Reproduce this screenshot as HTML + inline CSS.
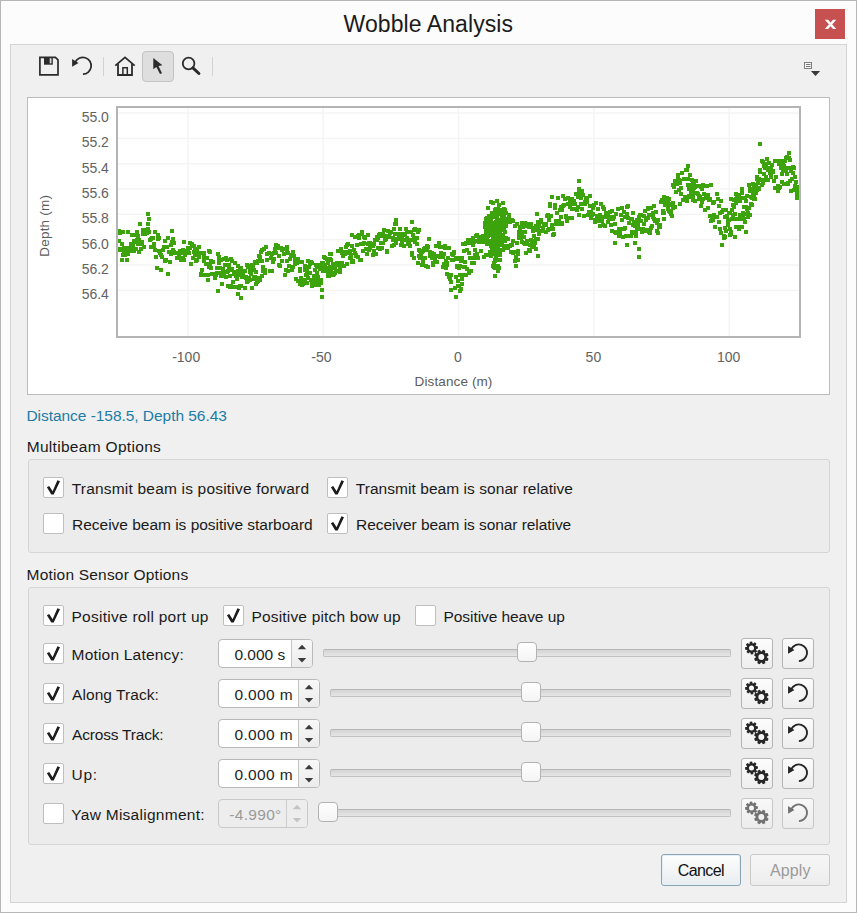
<!DOCTYPE html><html><head><meta charset="utf-8"><title>Wobble Analysis</title><style>
html,body{margin:0;padding:0}
body{width:857px;height:913px;position:relative;overflow:hidden;background:#fcfcfc;font-family:"Liberation Sans",sans-serif;}
.abs,.t,.cb,.grp,.btn,.spin,.trk,.thumb{position:absolute;box-sizing:border-box}
.t{white-space:pre;line-height:20px;height:20px}
.cb{width:21px;height:21px;background:#fff;border:1px solid #bfbfbf;border-radius:2px}
.grp{background:#ececec;border:1px solid #d5d5d5;border-radius:3px}
.btn{border:1px solid #b4b4b4;border-radius:3px;background:linear-gradient(#fcfcfc,#eeeeee)}
.spin{height:29px;border:1px solid #b9b9b9;border-radius:4px;background:#fff;overflow:hidden}
.spin .ar{position:absolute;top:0;bottom:0;right:0;width:20px;border-left:1px solid #c4c4c4;background:linear-gradient(#f8f8f8,#ececec)}
.spin.dis{background:#ededed;border-color:#c9c9c9}
.spin.dis .ar{background:#ededed;border-left-color:#cfcfcf}
.trk{height:8px;border:1px solid #c2c2c2;border-top-color:#b6b6b6;border-radius:2px;background:linear-gradient(#d4d4d4,#e6e6e6)}
.thumb{width:20px;height:20px;border:1px solid #b2b2b2;border-radius:4px;background:linear-gradient(#ffffff,#f4f4f4)}
svg{position:absolute;left:0;top:0}

</style></head><body>
<div class="abs" style="left:0;top:0;width:857px;height:913px;border:1px solid #b6b6b6"></div>
<div class="abs" style="left:10px;top:44px;width:837px;height:859px;border:1px solid #d4d4d4;background:#f0f0f0"></div>
<div class="abs" style="left:815px;top:9px;width:30px;height:30px;background:#c75050"></div>
<div class="abs" style="left:142px;top:51px;width:32px;height:31px;background:#dedede;border:1px solid #c3c3c3;border-radius:4px"></div>
<div class="abs" style="left:103px;top:57px;width:1px;height:19px;background:#d2d2d2"></div>
<div class="abs" style="left:212px;top:57px;width:1px;height:19px;background:#d2d2d2"></div>
<div class="abs" style="left:27px;top:97px;width:803px;height:298px;background:#fff;border:1px solid #bcbcbc"></div>
<div class="grp" style="left:28px;top:459px;width:802px;height:94px"></div>
<div class="grp" style="left:28px;top:587px;width:802px;height:258px"></div>
<div class="cb" style="left:43px;top:477px"></div>
<div class="cb" style="left:43px;top:513px"></div>
<div class="cb" style="left:327px;top:477px"></div>
<div class="cb" style="left:327px;top:513px"></div>
<div class="cb" style="left:43px;top:605px"></div>
<div class="cb" style="left:223px;top:605px"></div>
<div class="cb" style="left:415px;top:605px"></div>
<div class="cb" style="left:43px;top:643px"></div>
<div class="cb" style="left:43px;top:683px"></div>
<div class="cb" style="left:43px;top:723px"></div>
<div class="cb" style="left:43px;top:763px"></div>
<div class="cb" style="left:43px;top:803px"></div>
<div class="spin" style="left:218px;top:639px;width:95px"><div class="ar"></div></div>
<div class="spin" style="left:218px;top:679px;width:102px"><div class="ar"></div></div>
<div class="spin" style="left:218px;top:719px;width:102px"><div class="ar"></div></div>
<div class="spin" style="left:218px;top:759px;width:102px"><div class="ar"></div></div>
<div class="spin dis" style="left:218px;top:799px;width:90px"><div class="ar"></div></div>
<div class="trk" style="left:323px;top:649px;width:408px"></div>
<div class="thumb" style="left:517px;top:642px"></div>
<div class="trk" style="left:330px;top:689px;width:401px"></div>
<div class="thumb" style="left:521px;top:682px"></div>
<div class="trk" style="left:330px;top:729px;width:401px"></div>
<div class="thumb" style="left:521px;top:722px"></div>
<div class="trk" style="left:330px;top:769px;width:401px"></div>
<div class="thumb" style="left:521px;top:762px"></div>
<div class="trk" style="left:318px;top:809px;width:413px"></div>
<div class="thumb" style="left:318px;top:802px"></div>
<div class="btn" style="left:741px;top:638px;width:32px;height:31px;"></div>
<div class="btn" style="left:782px;top:638px;width:32px;height:31px;"></div>
<div class="btn" style="left:741px;top:678px;width:32px;height:31px;"></div>
<div class="btn" style="left:782px;top:678px;width:32px;height:31px;"></div>
<div class="btn" style="left:741px;top:718px;width:32px;height:31px;"></div>
<div class="btn" style="left:782px;top:718px;width:32px;height:31px;"></div>
<div class="btn" style="left:741px;top:758px;width:32px;height:31px;"></div>
<div class="btn" style="left:782px;top:758px;width:32px;height:31px;"></div>
<div class="btn" style="left:741px;top:798px;width:32px;height:31px;border-color:#c6c6c6;background:linear-gradient(#f8f8f8,#ececec);"></div>
<div class="btn" style="left:782px;top:798px;width:32px;height:31px;border-color:#c6c6c6;background:linear-gradient(#f8f8f8,#ececec);"></div>
<div class="btn" style="left:661px;top:854px;width:80px;height:32px;border-color:#8aa3b5;box-shadow:inset 0 0 0 1px #e4f0f8;background:linear-gradient(#fdfdfd,#e9edf0)"></div>
<div class="btn" style="left:750px;top:854px;width:80px;height:32px;border-color:#c9c9c9;background:linear-gradient(#f6f6f6,#ededed)"></div>
<svg width="857" height="913" viewBox="0 0 857 913" font-family="Liberation Sans, sans-serif"><path d="M824.8 19.8h3.3l8.2 9.3h-3.3z" fill="#fff"/><path d="M836.3 19.8h-3.3l-8.2 9.3h3.3z" fill="#fff"/><path d="M39.9 57.3H55.4L58 59.9V74.9H39.9Z" fill="none" stroke="#2b2b2b" stroke-width="1.7" stroke-linejoin="miter"/><rect x="44" y="57" width="8.8" height="7.7" fill="#2b2b2b"/><rect x="49.7" y="58.2" width="1.8" height="5.2" fill="#d8d8d8"/><path d="M75.32 61.94A8.4 8.4 0 1 1 82.95 74.15" fill="none" stroke="#2b2b2b" stroke-width="1.75"/><path d="M72.10 59.00L72.10 66.70L78.50 63.10Z" fill="#2b2b2b"/><path d="M115.3 65.6L125 57.4L134.7 65.6" fill="none" stroke="#2b2b2b" stroke-width="1.8" stroke-linejoin="miter"/><path d="M118 64V75H132V64" fill="none" stroke="#2b2b2b" stroke-width="1.8"/><path d="M122.9 75V67.7H127.3V75" fill="none" stroke="#2b2b2b" stroke-width="1.5"/><path d="M153.3 57.9V69.3L156.4 67L160 74.1L162 73.2L158.5 66.1L162.4 65.2Z" fill="#2b2b2b"/><circle cx="188.6" cy="63.5" r="5.8" fill="none" stroke="#2b2b2b" stroke-width="1.8"/><path d="M192.9 67.9L198.9 73.5" stroke="#2b2b2b" stroke-width="3" stroke-linecap="round"/><rect x="804.5" y="62.5" width="7" height="6" fill="#f6f6f6" stroke="#808080" stroke-width="1"/><path d="M806 64.5h4.5M806 66.5h4.5" stroke="#7a7a7a" stroke-width="1"/><path d="M810.9 71H820.1L815.5 76Z" fill="#3a3a3a"/><rect x="118" y="112.3" width="681" height="1.4" fill="#f4f4f4"/><rect x="118" y="137.6" width="681" height="1.4" fill="#f4f4f4"/><rect x="118" y="163.0" width="681" height="1.4" fill="#f4f4f4"/><rect x="118" y="188.3" width="681" height="1.4" fill="#f4f4f4"/><rect x="118" y="213.6" width="681" height="1.4" fill="#f4f4f4"/><rect x="118" y="238.9" width="681" height="1.4" fill="#f4f4f4"/><rect x="118" y="264.3" width="681" height="1.4" fill="#f4f4f4"/><rect x="118" y="289.6" width="681" height="1.4" fill="#f4f4f4"/><rect x="187.3" y="108" width="1.4" height="228" fill="#f4f4f4"/><rect x="322.5" y="108" width="1.4" height="228" fill="#f4f4f4"/><rect x="457.9" y="108" width="1.4" height="228" fill="#f4f4f4"/><rect x="593.3" y="108" width="1.4" height="228" fill="#f4f4f4"/><rect x="728.5" y="108" width="1.4" height="228" fill="#f4f4f4"/><clipPath id="pc"><rect x="118" y="108" width="682" height="228"/></clipPath><path clip-path="url(#pc)" d="M117 248h4v4h-4zM117 239h4v4h-4zM117 229h4v4h-4zM118 231h4v4h-4zM118 247h4v4h-4zM119 247h4v4h-4zM120 258h4v4h-4zM120 242h4v4h-4zM121 253h4v4h-4zM121 248h4v4h-4zM121 230h4v4h-4zM122 249h4v4h-4zM122 246h4v4h-4zM123 253h4v4h-4zM124 246h4v4h-4zM125 248h4v4h-4zM125 258h4v4h-4zM126 252h4v4h-4zM126 230h4v4h-4zM127 246h4v4h-4zM128 249h4v4h-4zM129 242h4v4h-4zM130 233h4v4h-4zM130 247h4v4h-4zM131 244h4v4h-4zM131 247h4v4h-4zM132 233h4v4h-4zM132 249h4v4h-4zM132 239h4v4h-4zM133 240h4v4h-4zM134 247h4v4h-4zM135 238h4v4h-4zM135 230h4v4h-4zM136 234h4v4h-4zM136 242h4v4h-4zM137 238h4v4h-4zM137 250h4v4h-4zM138 242h4v4h-4zM139 247h4v4h-4zM140 240h4v4h-4zM140 241h4v4h-4zM141 232h4v4h-4zM141 228h4v4h-4zM141 229h4v4h-4zM142 245h4v4h-4zM143 232h4v4h-4zM143 229h4v4h-4zM144 231h4v4h-4zM145 228h4v4h-4zM145 231h4v4h-4zM146 227h4v4h-4zM147 230h4v4h-4zM148 238h4v4h-4zM149 237h4v4h-4zM149 245h4v4h-4zM150 236h4v4h-4zM151 236h4v4h-4zM152 245h4v4h-4zM152 242h4v4h-4zM153 230h4v4h-4zM153 248h4v4h-4zM154 255h4v4h-4zM156 233h4v4h-4zM156 237h4v4h-4zM157 249h4v4h-4zM157 236h4v4h-4zM158 251h4v4h-4zM159 253h4v4h-4zM160 255h4v4h-4zM161 248h4v4h-4zM162 245h4v4h-4zM163 239h4v4h-4zM163 259h4v4h-4zM164 258h4v4h-4zM165 245h4v4h-4zM166 236h4v4h-4zM167 250h4v4h-4zM168 260h4v4h-4zM169 243h4v4h-4zM169 252h4v4h-4zM170 240h4v4h-4zM171 248h4v4h-4zM171 237h4v4h-4zM172 250h4v4h-4zM172 241h4v4h-4zM172 241h4v4h-4zM173 251h4v4h-4zM174 251h4v4h-4zM175 251h4v4h-4zM175 256h4v4h-4zM176 256h4v4h-4zM177 252h4v4h-4zM177 254h4v4h-4zM178 249h4v4h-4zM179 258h4v4h-4zM180 251h4v4h-4zM181 256h4v4h-4zM181 248h4v4h-4zM182 240h4v4h-4zM182 258h4v4h-4zM183 253h4v4h-4zM183 253h4v4h-4zM184 249h4v4h-4zM185 249h4v4h-4zM186 250h4v4h-4zM186 246h4v4h-4zM187 251h4v4h-4zM188 246h4v4h-4zM188 241h4v4h-4zM189 262h4v4h-4zM190 242h4v4h-4zM191 244h4v4h-4zM191 256h4v4h-4zM192 250h4v4h-4zM192 244h4v4h-4zM193 253h4v4h-4zM193 248h4v4h-4zM193 247h4v4h-4zM194 250h4v4h-4zM194 259h4v4h-4zM195 258h4v4h-4zM195 248h4v4h-4zM196 253h4v4h-4zM196 253h4v4h-4zM197 255h4v4h-4zM197 245h4v4h-4zM198 251h4v4h-4zM199 273h4v4h-4zM199 272h4v4h-4zM200 268h4v4h-4zM201 273h4v4h-4zM202 259h4v4h-4zM202 251h4v4h-4zM202 255h4v4h-4zM203 273h4v4h-4zM204 256h4v4h-4zM204 262h4v4h-4zM205 256h4v4h-4zM206 273h4v4h-4zM206 278h4v4h-4zM207 249h4v4h-4zM207 265h4v4h-4zM208 250h4v4h-4zM208 262h4v4h-4zM209 259h4v4h-4zM209 266h4v4h-4zM210 272h4v4h-4zM211 260h4v4h-4zM212 272h4v4h-4zM213 276h4v4h-4zM214 273h4v4h-4zM215 266h4v4h-4zM215 271h4v4h-4zM216 252h4v4h-4zM217 257h4v4h-4zM217 261h4v4h-4zM217 255h4v4h-4zM218 266h4v4h-4zM219 274h4v4h-4zM219 271h4v4h-4zM219 258h4v4h-4zM220 274h4v4h-4zM220 282h4v4h-4zM221 267h4v4h-4zM222 271h4v4h-4zM222 257h4v4h-4zM223 263h4v4h-4zM224 256h4v4h-4zM224 275h4v4h-4zM225 270h4v4h-4zM225 258h4v4h-4zM226 284h4v4h-4zM226 269h4v4h-4zM227 267h4v4h-4zM227 263h4v4h-4zM228 274h4v4h-4zM228 285h4v4h-4zM229 257h4v4h-4zM229 284h4v4h-4zM230 259h4v4h-4zM230 267h4v4h-4zM230 268h4v4h-4zM231 280h4v4h-4zM231 285h4v4h-4zM232 272h4v4h-4zM232 270h4v4h-4zM233 270h4v4h-4zM233 261h4v4h-4zM234 270h4v4h-4zM234 274h4v4h-4zM234 285h4v4h-4zM235 277h4v4h-4zM236 264h4v4h-4zM236 273h4v4h-4zM236 269h4v4h-4zM237 271h4v4h-4zM237 270h4v4h-4zM237 286h4v4h-4zM238 269h4v4h-4zM238 266h4v4h-4zM238 284h4v4h-4zM239 284h4v4h-4zM239 266h4v4h-4zM240 271h4v4h-4zM240 269h4v4h-4zM240 275h4v4h-4zM241 272h4v4h-4zM241 269h4v4h-4zM242 275h4v4h-4zM242 269h4v4h-4zM243 269h4v4h-4zM243 286h4v4h-4zM244 276h4v4h-4zM244 275h4v4h-4zM245 263h4v4h-4zM245 280h4v4h-4zM246 265h4v4h-4zM246 279h4v4h-4zM247 278h4v4h-4zM247 276h4v4h-4zM248 268h4v4h-4zM248 270h4v4h-4zM248 278h4v4h-4zM249 264h4v4h-4zM249 272h4v4h-4zM250 263h4v4h-4zM250 286h4v4h-4zM251 264h4v4h-4zM251 268h4v4h-4zM252 268h4v4h-4zM252 277h4v4h-4zM252 276h4v4h-4zM253 260h4v4h-4zM253 275h4v4h-4zM254 276h4v4h-4zM254 282h4v4h-4zM254 270h4v4h-4zM255 280h4v4h-4zM255 261h4v4h-4zM256 279h4v4h-4zM256 259h4v4h-4zM257 254h4v4h-4zM257 276h4v4h-4zM258 278h4v4h-4zM258 255h4v4h-4zM259 250h4v4h-4zM260 259h4v4h-4zM260 248h4v4h-4zM260 274h4v4h-4zM261 265h4v4h-4zM261 269h4v4h-4zM262 247h4v4h-4zM263 271h4v4h-4zM263 270h4v4h-4zM263 268h4v4h-4zM264 245h4v4h-4zM265 258h4v4h-4zM265 252h4v4h-4zM267 251h4v4h-4zM267 251h4v4h-4zM268 269h4v4h-4zM268 269h4v4h-4zM269 256h4v4h-4zM270 252h4v4h-4zM270 269h4v4h-4zM271 260h4v4h-4zM272 257h4v4h-4zM272 251h4v4h-4zM273 247h4v4h-4zM274 243h4v4h-4zM274 251h4v4h-4zM275 246h4v4h-4zM276 244h4v4h-4zM277 263h4v4h-4zM277 254h4v4h-4zM278 264h4v4h-4zM279 246h4v4h-4zM280 259h4v4h-4zM280 248h4v4h-4zM281 247h4v4h-4zM282 252h4v4h-4zM282 252h4v4h-4zM283 273h4v4h-4zM284 268h4v4h-4zM285 259h4v4h-4zM285 248h4v4h-4zM285 245h4v4h-4zM286 251h4v4h-4zM286 269h4v4h-4zM287 264h4v4h-4zM288 257h4v4h-4zM289 254h4v4h-4zM289 253h4v4h-4zM290 268h4v4h-4zM290 254h4v4h-4zM291 250h4v4h-4zM291 265h4v4h-4zM292 254h4v4h-4zM293 258h4v4h-4zM293 262h4v4h-4zM294 277h4v4h-4zM295 261h4v4h-4zM296 257h4v4h-4zM296 279h4v4h-4zM297 279h4v4h-4zM297 260h4v4h-4zM298 282h4v4h-4zM298 269h4v4h-4zM298 267h4v4h-4zM299 278h4v4h-4zM299 276h4v4h-4zM300 283h4v4h-4zM300 260h4v4h-4zM301 282h4v4h-4zM302 278h4v4h-4zM302 281h4v4h-4zM303 264h4v4h-4zM303 268h4v4h-4zM303 278h4v4h-4zM304 273h4v4h-4zM305 281h4v4h-4zM305 273h4v4h-4zM305 269h4v4h-4zM306 276h4v4h-4zM306 259h4v4h-4zM307 265h4v4h-4zM308 271h4v4h-4zM308 262h4v4h-4zM308 261h4v4h-4zM309 260h4v4h-4zM309 278h4v4h-4zM310 261h4v4h-4zM310 284h4v4h-4zM310 282h4v4h-4zM311 280h4v4h-4zM312 283h4v4h-4zM312 283h4v4h-4zM312 279h4v4h-4zM312 274h4v4h-4zM313 277h4v4h-4zM313 268h4v4h-4zM314 263h4v4h-4zM314 283h4v4h-4zM315 279h4v4h-4zM315 265h4v4h-4zM315 271h4v4h-4zM316 275h4v4h-4zM317 283h4v4h-4zM317 278h4v4h-4zM318 267h4v4h-4zM318 263h4v4h-4zM319 278h4v4h-4zM319 281h4v4h-4zM320 265h4v4h-4zM320 261h4v4h-4zM321 269h4v4h-4zM321 261h4v4h-4zM322 255h4v4h-4zM322 263h4v4h-4zM322 269h4v4h-4zM323 266h4v4h-4zM323 263h4v4h-4zM323 256h4v4h-4zM324 266h4v4h-4zM324 268h4v4h-4zM325 268h4v4h-4zM325 257h4v4h-4zM326 274h4v4h-4zM326 261h4v4h-4zM326 270h4v4h-4zM327 274h4v4h-4zM327 266h4v4h-4zM327 271h4v4h-4zM328 257h4v4h-4zM328 265h4v4h-4zM328 252h4v4h-4zM329 268h4v4h-4zM329 252h4v4h-4zM329 258h4v4h-4zM330 271h4v4h-4zM331 263h4v4h-4zM331 262h4v4h-4zM331 273h4v4h-4zM332 266h4v4h-4zM332 272h4v4h-4zM333 271h4v4h-4zM333 271h4v4h-4zM333 265h4v4h-4zM334 269h4v4h-4zM335 261h4v4h-4zM335 262h4v4h-4zM336 263h4v4h-4zM336 261h4v4h-4zM336 261h4v4h-4zM336 249h4v4h-4zM337 263h4v4h-4zM337 249h4v4h-4zM338 267h4v4h-4zM338 270h4v4h-4zM339 263h4v4h-4zM339 247h4v4h-4zM340 261h4v4h-4zM340 251h4v4h-4zM340 263h4v4h-4zM341 254h4v4h-4zM341 250h4v4h-4zM342 251h4v4h-4zM342 264h4v4h-4zM343 252h4v4h-4zM343 250h4v4h-4zM344 245h4v4h-4zM345 262h4v4h-4zM345 243h4v4h-4zM346 242h4v4h-4zM346 251h4v4h-4zM347 250h4v4h-4zM348 249h4v4h-4zM348 256h4v4h-4zM349 253h4v4h-4zM349 255h4v4h-4zM350 244h4v4h-4zM350 260h4v4h-4zM350 233h4v4h-4zM351 260h4v4h-4zM351 259h4v4h-4zM352 248h4v4h-4zM353 251h4v4h-4zM353 235h4v4h-4zM354 253h4v4h-4zM354 254h4v4h-4zM355 243h4v4h-4zM356 234h4v4h-4zM356 255h4v4h-4zM357 236h4v4h-4zM357 233h4v4h-4zM358 258h4v4h-4zM358 258h4v4h-4zM359 258h4v4h-4zM359 242h4v4h-4zM360 232h4v4h-4zM360 230h4v4h-4zM361 249h4v4h-4zM361 242h4v4h-4zM362 241h4v4h-4zM362 235h4v4h-4zM363 236h4v4h-4zM364 247h4v4h-4zM365 252h4v4h-4zM366 242h4v4h-4zM366 233h4v4h-4zM367 248h4v4h-4zM367 241h4v4h-4zM368 241h4v4h-4zM368 246h4v4h-4zM369 242h4v4h-4zM370 243h4v4h-4zM371 253h4v4h-4zM371 244h4v4h-4zM372 242h4v4h-4zM372 249h4v4h-4zM373 252h4v4h-4zM373 238h4v4h-4zM374 252h4v4h-4zM375 235h4v4h-4zM375 238h4v4h-4zM376 236h4v4h-4zM376 246h4v4h-4zM377 233h4v4h-4zM378 232h4v4h-4zM378 247h4v4h-4zM379 241h4v4h-4zM379 234h4v4h-4zM380 246h4v4h-4zM381 241h4v4h-4zM381 232h4v4h-4zM382 234h4v4h-4zM382 228h4v4h-4zM383 234h4v4h-4zM383 238h4v4h-4zM384 237h4v4h-4zM385 250h4v4h-4zM385 249h4v4h-4zM386 235h4v4h-4zM386 229h4v4h-4zM387 235h4v4h-4zM387 234h4v4h-4zM388 231h4v4h-4zM389 230h4v4h-4zM390 244h4v4h-4zM391 238h4v4h-4zM391 236h4v4h-4zM392 243h4v4h-4zM392 227h4v4h-4zM393 222h4v4h-4zM393 232h4v4h-4zM394 241h4v4h-4zM394 222h4v4h-4zM395 237h4v4h-4zM396 232h4v4h-4zM397 237h4v4h-4zM397 236h4v4h-4zM398 227h4v4h-4zM399 243h4v4h-4zM399 237h4v4h-4zM399 232h4v4h-4zM400 240h4v4h-4zM400 234h4v4h-4zM401 233h4v4h-4zM401 232h4v4h-4zM402 244h4v4h-4zM403 233h4v4h-4zM403 238h4v4h-4zM404 227h4v4h-4zM405 236h4v4h-4zM405 230h4v4h-4zM406 242h4v4h-4zM407 238h4v4h-4zM407 242h4v4h-4zM408 244h4v4h-4zM409 238h4v4h-4zM409 230h4v4h-4zM410 253h4v4h-4zM410 251h4v4h-4zM411 233h4v4h-4zM412 236h4v4h-4zM412 256h4v4h-4zM412 228h4v4h-4zM413 227h4v4h-4zM413 240h4v4h-4zM414 236h4v4h-4zM415 242h4v4h-4zM415 236h4v4h-4zM416 230h4v4h-4zM416 261h4v4h-4zM417 248h4v4h-4zM417 254h4v4h-4zM418 256h4v4h-4zM418 249h4v4h-4zM419 253h4v4h-4zM420 263h4v4h-4zM420 250h4v4h-4zM421 260h4v4h-4zM421 257h4v4h-4zM421 249h4v4h-4zM422 247h4v4h-4zM423 256h4v4h-4zM423 246h4v4h-4zM424 248h4v4h-4zM424 264h4v4h-4zM425 244h4v4h-4zM425 246h4v4h-4zM426 265h4v4h-4zM426 245h4v4h-4zM427 237h4v4h-4zM428 254h4v4h-4zM428 250h4v4h-4zM429 253h4v4h-4zM430 251h4v4h-4zM430 256h4v4h-4zM431 261h4v4h-4zM431 263h4v4h-4zM432 252h4v4h-4zM433 258h4v4h-4zM434 254h4v4h-4zM434 244h4v4h-4zM435 260h4v4h-4zM435 260h4v4h-4zM436 254h4v4h-4zM437 241h4v4h-4zM438 255h4v4h-4zM438 245h4v4h-4zM439 255h4v4h-4zM439 245h4v4h-4zM439 251h4v4h-4zM440 245h4v4h-4zM440 254h4v4h-4zM441 265h4v4h-4zM441 255h4v4h-4zM442 252h4v4h-4zM442 262h4v4h-4zM443 244h4v4h-4zM443 246h4v4h-4zM444 266h4v4h-4zM444 259h4v4h-4zM445 261h4v4h-4zM445 272h4v4h-4zM445 263h4v4h-4zM446 256h4v4h-4zM447 275h4v4h-4zM447 246h4v4h-4zM448 275h4v4h-4zM448 277h4v4h-4zM449 280h4v4h-4zM449 273h4v4h-4zM450 258h4v4h-4zM450 252h4v4h-4zM451 253h4v4h-4zM451 258h4v4h-4zM452 250h4v4h-4zM452 251h4v4h-4zM453 286h4v4h-4zM454 275h4v4h-4zM454 256h4v4h-4zM455 265h4v4h-4zM455 264h4v4h-4zM455 257h4v4h-4zM456 279h4v4h-4zM456 284h4v4h-4zM456 256h4v4h-4zM457 266h4v4h-4zM457 284h4v4h-4zM458 273h4v4h-4zM458 264h4v4h-4zM458 257h4v4h-4zM459 287h4v4h-4zM459 259h4v4h-4zM460 282h4v4h-4zM460 256h4v4h-4zM460 277h4v4h-4zM461 242h4v4h-4zM462 249h4v4h-4zM462 265h4v4h-4zM462 273h4v4h-4zM463 242h4v4h-4zM463 260h4v4h-4zM463 265h4v4h-4zM464 273h4v4h-4zM464 241h4v4h-4zM465 267h4v4h-4zM465 248h4v4h-4zM466 238h4v4h-4zM467 271h4v4h-4zM467 269h4v4h-4zM467 251h4v4h-4zM468 256h4v4h-4zM468 241h4v4h-4zM469 269h4v4h-4zM470 261h4v4h-4zM470 238h4v4h-4zM471 243h4v4h-4zM471 236h4v4h-4zM472 240h4v4h-4zM472 261h4v4h-4zM472 256h4v4h-4zM473 253h4v4h-4zM473 255h4v4h-4zM473 248h4v4h-4zM474 234h4v4h-4zM475 239h4v4h-4zM475 233h4v4h-4zM475 252h4v4h-4zM476 256h4v4h-4zM477 240h4v4h-4zM477 238h4v4h-4zM478 235h4v4h-4zM478 238h4v4h-4zM479 249h4v4h-4zM480 240h4v4h-4zM480 235h4v4h-4zM481 234h4v4h-4zM482 238h4v4h-4zM482 236h4v4h-4zM482 255h4v4h-4zM483 223h4v4h-4zM483 221h4v4h-4zM483 225h4v4h-4zM483 236h4v4h-4zM483 224h4v4h-4zM484 253h4v4h-4zM484 240h4v4h-4zM484 253h4v4h-4zM484 232h4v4h-4zM484 217h4v4h-4zM484 229h4v4h-4zM485 216h4v4h-4zM485 222h4v4h-4zM485 242h4v4h-4zM485 238h4v4h-4zM485 221h4v4h-4zM486 227h4v4h-4zM486 226h4v4h-4zM486 234h4v4h-4zM486 253h4v4h-4zM486 217h4v4h-4zM486 223h4v4h-4zM487 227h4v4h-4zM487 214h4v4h-4zM487 231h4v4h-4zM487 239h4v4h-4zM487 225h4v4h-4zM488 242h4v4h-4zM488 230h4v4h-4zM488 250h4v4h-4zM488 251h4v4h-4zM488 252h4v4h-4zM489 244h4v4h-4zM489 226h4v4h-4zM489 241h4v4h-4zM489 233h4v4h-4zM489 244h4v4h-4zM490 228h4v4h-4zM490 214h4v4h-4zM490 211h4v4h-4zM490 247h4v4h-4zM491 231h4v4h-4zM491 250h4v4h-4zM491 233h4v4h-4zM491 233h4v4h-4zM491 231h4v4h-4zM492 223h4v4h-4zM492 252h4v4h-4zM492 211h4v4h-4zM492 233h4v4h-4zM492 215h4v4h-4zM493 227h4v4h-4zM493 222h4v4h-4zM493 221h4v4h-4zM493 242h4v4h-4zM494 248h4v4h-4zM494 254h4v4h-4zM494 220h4v4h-4zM494 215h4v4h-4zM494 234h4v4h-4zM495 228h4v4h-4zM495 225h4v4h-4zM495 238h4v4h-4zM495 245h4v4h-4zM495 216h4v4h-4zM495 219h4v4h-4zM496 252h4v4h-4zM496 212h4v4h-4zM496 212h4v4h-4zM496 230h4v4h-4zM496 243h4v4h-4zM497 241h4v4h-4zM497 223h4v4h-4zM497 211h4v4h-4zM497 222h4v4h-4zM497 209h4v4h-4zM498 249h4v4h-4zM498 218h4v4h-4zM498 235h4v4h-4zM498 221h4v4h-4zM498 249h4v4h-4zM498 229h4v4h-4zM499 220h4v4h-4zM499 241h4v4h-4zM499 222h4v4h-4zM499 239h4v4h-4zM499 212h4v4h-4zM500 224h4v4h-4zM500 243h4v4h-4zM500 215h4v4h-4zM500 208h4v4h-4zM500 213h4v4h-4zM500 218h4v4h-4zM501 225h4v4h-4zM501 233h4v4h-4zM501 248h4v4h-4zM501 236h4v4h-4zM502 226h4v4h-4zM502 217h4v4h-4zM502 222h4v4h-4zM502 215h4v4h-4zM502 228h4v4h-4zM503 239h4v4h-4zM503 230h4v4h-4zM503 209h4v4h-4zM503 220h4v4h-4zM503 221h4v4h-4zM503 208h4v4h-4zM503 211h4v4h-4zM504 224h4v4h-4zM504 245h4v4h-4zM504 219h4v4h-4zM504 236h4v4h-4zM505 237h4v4h-4zM505 246h4v4h-4zM506 217h4v4h-4zM506 246h4v4h-4zM507 213h4v4h-4zM507 220h4v4h-4zM507 214h4v4h-4zM508 220h4v4h-4zM508 244h4v4h-4zM509 243h4v4h-4zM509 250h4v4h-4zM510 218h4v4h-4zM511 219h4v4h-4zM511 251h4v4h-4zM511 239h4v4h-4zM512 250h4v4h-4zM513 224h4v4h-4zM513 259h4v4h-4zM514 255h4v4h-4zM515 222h4v4h-4zM515 241h4v4h-4zM516 250h4v4h-4zM516 252h4v4h-4zM516 258h4v4h-4zM517 230h4v4h-4zM517 236h4v4h-4zM518 225h4v4h-4zM518 229h4v4h-4zM519 236h4v4h-4zM519 230h4v4h-4zM520 240h4v4h-4zM520 233h4v4h-4zM521 225h4v4h-4zM522 235h4v4h-4zM522 241h4v4h-4zM523 221h4v4h-4zM523 242h4v4h-4zM523 230h4v4h-4zM524 224h4v4h-4zM524 251h4v4h-4zM525 242h4v4h-4zM526 222h4v4h-4zM526 224h4v4h-4zM527 248h4v4h-4zM527 248h4v4h-4zM528 225h4v4h-4zM528 243h4v4h-4zM529 222h4v4h-4zM529 238h4v4h-4zM530 242h4v4h-4zM531 226h4v4h-4zM531 229h4v4h-4zM532 244h4v4h-4zM532 234h4v4h-4zM533 239h4v4h-4zM533 241h4v4h-4zM534 224h4v4h-4zM534 237h4v4h-4zM534 247h4v4h-4zM535 228h4v4h-4zM535 212h4v4h-4zM536 225h4v4h-4zM536 220h4v4h-4zM537 224h4v4h-4zM537 232h4v4h-4zM538 229h4v4h-4zM539 220h4v4h-4zM539 218h4v4h-4zM540 229h4v4h-4zM541 226h4v4h-4zM541 227h4v4h-4zM542 222h4v4h-4zM543 223h4v4h-4zM544 230h4v4h-4zM544 223h4v4h-4zM544 222h4v4h-4zM545 214h4v4h-4zM546 213h4v4h-4zM546 228h4v4h-4zM547 227h4v4h-4zM547 217h4v4h-4zM547 218h4v4h-4zM548 204h4v4h-4zM548 202h4v4h-4zM549 214h4v4h-4zM550 223h4v4h-4zM551 233h4v4h-4zM551 227h4v4h-4zM552 232h4v4h-4zM553 203h4v4h-4zM553 206h4v4h-4zM554 219h4v4h-4zM554 222h4v4h-4zM555 211h4v4h-4zM556 196h4v4h-4zM557 222h4v4h-4zM557 219h4v4h-4zM558 208h4v4h-4zM559 205h4v4h-4zM559 215h4v4h-4zM560 221h4v4h-4zM560 208h4v4h-4zM560 222h4v4h-4zM561 194h4v4h-4zM561 204h4v4h-4zM562 203h4v4h-4zM563 197h4v4h-4zM564 214h4v4h-4zM564 215h4v4h-4zM565 219h4v4h-4zM566 196h4v4h-4zM566 202h4v4h-4zM567 216h4v4h-4zM568 205h4v4h-4zM568 199h4v4h-4zM569 201h4v4h-4zM569 202h4v4h-4zM570 198h4v4h-4zM570 197h4v4h-4zM570 216h4v4h-4zM570 207h4v4h-4zM571 201h4v4h-4zM571 201h4v4h-4zM572 199h4v4h-4zM573 207h4v4h-4zM573 202h4v4h-4zM574 192h4v4h-4zM575 208h4v4h-4zM576 205h4v4h-4zM576 195h4v4h-4zM577 187h4v4h-4zM577 213h4v4h-4zM578 193h4v4h-4zM578 190h4v4h-4zM579 196h4v4h-4zM579 202h4v4h-4zM580 189h4v4h-4zM580 207h4v4h-4zM581 193h4v4h-4zM581 193h4v4h-4zM582 214h4v4h-4zM583 200h4v4h-4zM583 202h4v4h-4zM584 196h4v4h-4zM585 197h4v4h-4zM585 200h4v4h-4zM586 213h4v4h-4zM587 210h4v4h-4zM588 194h4v4h-4zM588 204h4v4h-4zM589 216h4v4h-4zM589 210h4v4h-4zM590 213h4v4h-4zM591 212h4v4h-4zM591 206h4v4h-4zM591 205h4v4h-4zM592 203h4v4h-4zM593 220h4v4h-4zM593 218h4v4h-4zM594 201h4v4h-4zM594 218h4v4h-4zM595 215h4v4h-4zM595 214h4v4h-4zM596 215h4v4h-4zM596 207h4v4h-4zM597 219h4v4h-4zM598 224h4v4h-4zM598 213h4v4h-4zM599 202h4v4h-4zM600 219h4v4h-4zM600 215h4v4h-4zM601 205h4v4h-4zM601 215h4v4h-4zM601 223h4v4h-4zM602 207h4v4h-4zM603 215h4v4h-4zM603 224h4v4h-4zM604 211h4v4h-4zM605 211h4v4h-4zM606 220h4v4h-4zM606 213h4v4h-4zM607 217h4v4h-4zM607 217h4v4h-4zM608 210h4v4h-4zM609 215h4v4h-4zM609 223h4v4h-4zM610 229h4v4h-4zM610 209h4v4h-4zM611 217h4v4h-4zM612 215h4v4h-4zM613 230h4v4h-4zM613 222h4v4h-4zM614 231h4v4h-4zM614 212h4v4h-4zM615 231h4v4h-4zM616 207h4v4h-4zM616 231h4v4h-4zM617 229h4v4h-4zM617 227h4v4h-4zM617 234h4v4h-4zM618 231h4v4h-4zM619 213h4v4h-4zM620 206h4v4h-4zM620 218h4v4h-4zM621 235h4v4h-4zM621 227h4v4h-4zM622 210h4v4h-4zM622 227h4v4h-4zM623 215h4v4h-4zM623 226h4v4h-4zM624 234h4v4h-4zM625 212h4v4h-4zM625 205h4v4h-4zM626 216h4v4h-4zM626 204h4v4h-4zM627 221h4v4h-4zM628 234h4v4h-4zM629 217h4v4h-4zM629 234h4v4h-4zM630 217h4v4h-4zM630 230h4v4h-4zM631 223h4v4h-4zM631 211h4v4h-4zM632 220h4v4h-4zM632 231h4v4h-4zM633 222h4v4h-4zM633 224h4v4h-4zM634 230h4v4h-4zM634 234h4v4h-4zM635 227h4v4h-4zM635 218h4v4h-4zM636 226h4v4h-4zM636 222h4v4h-4zM637 215h4v4h-4zM638 227h4v4h-4zM638 213h4v4h-4zM639 213h4v4h-4zM639 219h4v4h-4zM640 229h4v4h-4zM640 230h4v4h-4zM641 227h4v4h-4zM642 222h4v4h-4zM642 214h4v4h-4zM643 229h4v4h-4zM643 209h4v4h-4zM644 218h4v4h-4zM645 228h4v4h-4zM645 216h4v4h-4zM646 216h4v4h-4zM646 206h4v4h-4zM646 207h4v4h-4zM647 213h4v4h-4zM647 230h4v4h-4zM648 231h4v4h-4zM648 229h4v4h-4zM649 206h4v4h-4zM649 226h4v4h-4zM650 224h4v4h-4zM651 215h4v4h-4zM651 211h4v4h-4zM652 217h4v4h-4zM652 204h4v4h-4zM653 219h4v4h-4zM654 210h4v4h-4zM655 221h4v4h-4zM655 229h4v4h-4zM656 231h4v4h-4zM656 218h4v4h-4zM657 225h4v4h-4zM658 223h4v4h-4zM658 225h4v4h-4zM659 200h4v4h-4zM659 200h4v4h-4zM660 198h4v4h-4zM661 211h4v4h-4zM661 209h4v4h-4zM662 217h4v4h-4zM662 211h4v4h-4zM662 195h4v4h-4zM663 203h4v4h-4zM663 199h4v4h-4zM664 202h4v4h-4zM665 203h4v4h-4zM665 196h4v4h-4zM666 201h4v4h-4zM666 207h4v4h-4zM667 209h4v4h-4zM667 197h4v4h-4zM668 203h4v4h-4zM668 210h4v4h-4zM669 209h4v4h-4zM669 212h4v4h-4zM670 214h4v4h-4zM670 202h4v4h-4zM671 206h4v4h-4zM671 201h4v4h-4zM671 183h4v4h-4zM672 185h4v4h-4zM673 205h4v4h-4zM673 179h4v4h-4zM674 190h4v4h-4zM675 182h4v4h-4zM676 177h4v4h-4zM676 173h4v4h-4zM677 178h4v4h-4zM677 188h4v4h-4zM678 179h4v4h-4zM678 202h4v4h-4zM678 181h4v4h-4zM679 186h4v4h-4zM679 192h4v4h-4zM680 171h4v4h-4zM681 198h4v4h-4zM682 198h4v4h-4zM682 177h4v4h-4zM683 197h4v4h-4zM683 195h4v4h-4zM684 168h4v4h-4zM684 197h4v4h-4zM685 198h4v4h-4zM685 199h4v4h-4zM686 183h4v4h-4zM686 177h4v4h-4zM687 194h4v4h-4zM687 187h4v4h-4zM688 195h4v4h-4zM688 173h4v4h-4zM689 191h4v4h-4zM689 183h4v4h-4zM690 178h4v4h-4zM690 186h4v4h-4zM691 194h4v4h-4zM691 198h4v4h-4zM691 190h4v4h-4zM691 180h4v4h-4zM692 186h4v4h-4zM692 183h4v4h-4zM693 199h4v4h-4zM693 185h4v4h-4zM694 179h4v4h-4zM694 184h4v4h-4zM695 184h4v4h-4zM695 191h4v4h-4zM696 192h4v4h-4zM696 184h4v4h-4zM697 197h4v4h-4zM697 194h4v4h-4zM698 195h4v4h-4zM698 184h4v4h-4zM699 204h4v4h-4zM699 185h4v4h-4zM700 200h4v4h-4zM700 187h4v4h-4zM701 183h4v4h-4zM701 197h4v4h-4zM702 192h4v4h-4zM703 208h4v4h-4zM703 184h4v4h-4zM704 196h4v4h-4zM705 184h4v4h-4zM706 206h4v4h-4zM706 193h4v4h-4zM707 198h4v4h-4zM708 197h4v4h-4zM708 214h4v4h-4zM709 183h4v4h-4zM709 219h4v4h-4zM710 215h4v4h-4zM711 201h4v4h-4zM711 218h4v4h-4zM712 200h4v4h-4zM712 213h4v4h-4zM713 225h4v4h-4zM714 215h4v4h-4zM715 215h4v4h-4zM715 192h4v4h-4zM716 197h4v4h-4zM717 220h4v4h-4zM717 204h4v4h-4zM718 211h4v4h-4zM718 227h4v4h-4zM719 231h4v4h-4zM719 199h4v4h-4zM720 210h4v4h-4zM721 208h4v4h-4zM722 234h4v4h-4zM722 236h4v4h-4zM723 215h4v4h-4zM723 226h4v4h-4zM723 235h4v4h-4zM724 229h4v4h-4zM724 208h4v4h-4zM725 214h4v4h-4zM726 219h4v4h-4zM726 223h4v4h-4zM727 211h4v4h-4zM727 218h4v4h-4zM728 227h4v4h-4zM728 233h4v4h-4zM728 211h4v4h-4zM729 230h4v4h-4zM729 197h4v4h-4zM729 232h4v4h-4zM730 217h4v4h-4zM730 208h4v4h-4zM731 203h4v4h-4zM731 213h4v4h-4zM732 198h4v4h-4zM732 205h4v4h-4zM733 217h4v4h-4zM733 212h4v4h-4zM734 201h4v4h-4zM734 225h4v4h-4zM734 192h4v4h-4zM734 197h4v4h-4zM735 196h4v4h-4zM735 197h4v4h-4zM736 197h4v4h-4zM736 195h4v4h-4zM737 227h4v4h-4zM737 225h4v4h-4zM737 193h4v4h-4zM737 217h4v4h-4zM738 213h4v4h-4zM738 199h4v4h-4zM739 196h4v4h-4zM739 217h4v4h-4zM740 191h4v4h-4zM740 225h4v4h-4zM740 187h4v4h-4zM741 213h4v4h-4zM741 212h4v4h-4zM741 211h4v4h-4zM742 217h4v4h-4zM742 205h4v4h-4zM743 196h4v4h-4zM743 220h4v4h-4zM743 212h4v4h-4zM744 199h4v4h-4zM744 205h4v4h-4zM745 207h4v4h-4zM745 194h4v4h-4zM746 215h4v4h-4zM746 211h4v4h-4zM746 213h4v4h-4zM747 213h4v4h-4zM747 206h4v4h-4zM747 183h4v4h-4zM748 189h4v4h-4zM748 187h4v4h-4zM748 213h4v4h-4zM749 202h4v4h-4zM749 195h4v4h-4zM749 187h4v4h-4zM750 196h4v4h-4zM750 203h4v4h-4zM750 196h4v4h-4zM751 194h4v4h-4zM751 182h4v4h-4zM751 190h4v4h-4zM752 197h4v4h-4zM752 186h4v4h-4zM752 195h4v4h-4zM753 188h4v4h-4zM753 197h4v4h-4zM754 191h4v4h-4zM754 183h4v4h-4zM755 188h4v4h-4zM755 177h4v4h-4zM755 175h4v4h-4zM756 181h4v4h-4zM756 186h4v4h-4zM756 181h4v4h-4zM757 177h4v4h-4zM757 187h4v4h-4zM758 168h4v4h-4zM758 170h4v4h-4zM758 168h4v4h-4zM759 178h4v4h-4zM760 159h4v4h-4zM760 183h4v4h-4zM761 160h4v4h-4zM761 178h4v4h-4zM761 181h4v4h-4zM762 164h4v4h-4zM762 172h4v4h-4zM763 163h4v4h-4zM763 166h4v4h-4zM764 175h4v4h-4zM764 178h4v4h-4zM764 162h4v4h-4zM765 157h4v4h-4zM766 168h4v4h-4zM766 166h4v4h-4zM766 178h4v4h-4zM767 161h4v4h-4zM767 168h4v4h-4zM768 171h4v4h-4zM768 168h4v4h-4zM769 174h4v4h-4zM769 175h4v4h-4zM769 167h4v4h-4zM770 163h4v4h-4zM771 170h4v4h-4zM771 169h4v4h-4zM771 170h4v4h-4zM772 179h4v4h-4zM772 179h4v4h-4zM773 186h4v4h-4zM773 159h4v4h-4zM774 175h4v4h-4zM774 186h4v4h-4zM775 159h4v4h-4zM776 189h4v4h-4zM776 184h4v4h-4zM777 162h4v4h-4zM777 186h4v4h-4zM778 185h4v4h-4zM779 162h4v4h-4zM779 159h4v4h-4zM779 166h4v4h-4zM780 180h4v4h-4zM780 172h4v4h-4zM781 160h4v4h-4zM781 169h4v4h-4zM782 164h4v4h-4zM782 182h4v4h-4zM783 166h4v4h-4zM783 159h4v4h-4zM784 168h4v4h-4zM784 156h4v4h-4zM785 172h4v4h-4zM785 166h4v4h-4zM786 181h4v4h-4zM786 182h4v4h-4zM787 156h4v4h-4zM788 158h4v4h-4zM788 179h4v4h-4zM789 166h4v4h-4zM789 169h4v4h-4zM789 189h4v4h-4zM790 177h4v4h-4zM791 171h4v4h-4zM791 165h4v4h-4zM792 166h4v4h-4zM792 188h4v4h-4zM793 184h4v4h-4zM793 175h4v4h-4zM794 180h4v4h-4zM794 188h4v4h-4zM795 196h4v4h-4zM795 192h4v4h-4zM796 189h4v4h-4zM796 188h4v4h-4zM797 191h4v4h-4zM797 185h4v4h-4zM146 212h4v4h-4zM147 217h4v4h-4zM146 222h4v4h-4zM138 222h4v4h-4zM170 229h4v4h-4zM155 266h4v4h-4zM159 268h4v4h-4zM166 272h4v4h-4zM216 289h4v4h-4zM236 292h4v4h-4zM239 296h4v4h-4zM320 288h4v4h-4zM320 295h4v4h-4zM394 218h4v4h-4zM394 222h4v4h-4zM410 220h4v4h-4zM417 228h4v4h-4zM454 295h4v4h-4zM449 288h4v4h-4zM458 289h4v4h-4zM493 274h4v4h-4zM514 264h4v4h-4zM536 254h4v4h-4zM577 179h4v4h-4zM577 189h4v4h-4zM633 241h4v4h-4zM625 243h4v4h-4zM613 241h4v4h-4zM637 247h4v4h-4zM637 255h4v4h-4zM686 164h4v4h-4zM685 168h4v4h-4zM720 243h4v4h-4zM733 235h4v4h-4zM744 230h4v4h-4zM758 142h4v4h-4zM787 151h4v4h-4zM785 155h4v4h-4zM550 195h4v4h-4zM495 199h4v4h-4zM501 201h4v4h-4zM502 207h4v4h-4zM491 201h4v4h-4zM492 264h4v4h-4zM485 230h4v4h-4zM494 249h4v4h-4zM499 227h4v4h-4zM489 220h4v4h-4zM493 246h4v4h-4zM494 227h4v4h-4zM495 208h4v4h-4zM494 251h4v4h-4zM494 252h4v4h-4zM495 227h4v4h-4zM491 246h4v4h-4zM489 200h4v4h-4zM497 250h4v4h-4zM495 251h4v4h-4zM485 237h4v4h-4zM503 224h4v4h-4zM491 249h4v4h-4zM504 244h4v4h-4zM489 221h4v4h-4zM493 231h4v4h-4zM498 253h4v4h-4zM498 248h4v4h-4zM493 258h4v4h-4zM497 230h4v4h-4zM501 219h4v4h-4zM498 232h4v4h-4zM496 222h4v4h-4zM498 232h4v4h-4zM493 266h4v4h-4zM498 232h4v4h-4zM485 233h4v4h-4zM497 237h4v4h-4zM493 239h4v4h-4zM497 233h4v4h-4zM498 226h4v4h-4zM494 244h4v4h-4zM501 214h4v4h-4zM498 258h4v4h-4zM500 238h4v4h-4zM501 236h4v4h-4zM494 207h4v4h-4zM496 252h4v4h-4zM495 226h4v4h-4zM488 240h4v4h-4zM492 242h4v4h-4zM493 239h4v4h-4zM494 258h4v4h-4zM486 230h4v4h-4zM496 269h4v4h-4zM497 266h4v4h-4zM495 227h4v4h-4zM484 219h4v4h-4zM493 232h4v4h-4zM495 234h4v4h-4zM489 254h4v4h-4zM491 244h4v4h-4zM493 208h4v4h-4zM496 207h4v4h-4zM491 213h4v4h-4zM490 239h4v4h-4zM492 237h4v4h-4zM491 223h4v4h-4zM499 226h4v4h-4zM495 244h4v4h-4zM493 259h4v4h-4zM496 248h4v4h-4zM502 245h4v4h-4zM496 238h4v4h-4zM494 228h4v4h-4zM496 240h4v4h-4zM484 240h4v4h-4zM497 251h4v4h-4zM486 206h4v4h-4zM495 228h4v4h-4zM491 237h4v4h-4zM495 208h4v4h-4zM492 265h4v4h-4zM492 250h4v4h-4zM493 259h4v4h-4zM498 249h4v4h-4zM485 239h4v4h-4zM489 228h4v4h-4zM489 223h4v4h-4zM496 246h4v4h-4zM492 261h4v4h-4zM492 244h4v4h-4zM489 218h4v4h-4zM496 264h4v4h-4zM504 211h4v4h-4zM498 212h4v4h-4zM497 203h4v4h-4zM491 264h4v4h-4zM498 231h4v4h-4zM496 234h4v4h-4zM517 233h4v4h-4zM506 237h4v4h-4zM536 237h4v4h-4zM515 241h4v4h-4zM518 225h4v4h-4zM520 221h4v4h-4zM527 225h4v4h-4zM516 249h4v4h-4zM530 245h4v4h-4zM525 239h4v4h-4zM528 249h4v4h-4zM510 243h4v4h-4z" fill="#3ca30d"/><rect x="117" y="107" width="683" height="230" fill="none" stroke="#b4b4b4" stroke-width="2"/><text x="108.9" y="122.0" font-size="14" text-anchor="end" fill="#626262">55.0</text><text x="108.9" y="147.3" font-size="14" text-anchor="end" fill="#626262">55.2</text><text x="108.9" y="172.7" font-size="14" text-anchor="end" fill="#626262">55.4</text><text x="108.9" y="198.0" font-size="14" text-anchor="end" fill="#626262">55.6</text><text x="108.9" y="223.3" font-size="14" text-anchor="end" fill="#626262">55.8</text><text x="108.9" y="248.6" font-size="14" text-anchor="end" fill="#626262">56.0</text><text x="108.9" y="274.0" font-size="14" text-anchor="end" fill="#626262">56.2</text><text x="108.9" y="299.3" font-size="14" text-anchor="end" fill="#626262">56.4</text><text x="186.2" y="362.0" font-size="14" text-anchor="middle" fill="#626262">-100</text><text x="321.4" y="362.0" font-size="14" text-anchor="middle" fill="#626262">-50</text><text x="458.0" y="362.0" font-size="14" text-anchor="middle" fill="#626262">0</text><text x="593.4" y="362.0" font-size="14" text-anchor="middle" fill="#626262">50</text><text x="728.6" y="362.0" font-size="14" text-anchor="middle" fill="#626262">100</text><text x="414.58" y="386.0" font-size="13.5" letter-spacing="0.114" fill="#5c5c5c">Distance (m)</text><text transform="translate(48.6 256.8) rotate(-90)" font-size="13.5" letter-spacing="0.22" fill="#5c5c5c">Depth (m)</text><path d="M46.9 487.3L49.2 486.1L52.6 491.2L57.4 480.2L60.0 481.3L53.7 494.4L51.3 494.4Z" fill="#1c1c1c"/><path d="M330.9 487.3L333.2 486.1L336.6 491.2L341.4 480.2L344.0 481.3L337.7 494.4L335.3 494.4Z" fill="#1c1c1c"/><path d="M330.9 523.3L333.2 522.1L336.6 527.2L341.4 516.2L344.0 517.3L337.7 530.4L335.3 530.4Z" fill="#1c1c1c"/><path d="M46.9 615.3L49.2 614.1L52.6 619.2L57.4 608.2L60.0 609.3L53.7 622.4L51.3 622.4Z" fill="#1c1c1c"/><path d="M226.9 615.3L229.2 614.1L232.6 619.2L237.4 608.2L240.0 609.3L233.7 622.4L231.3 622.4Z" fill="#1c1c1c"/><path d="M46.9 653.3L49.2 652.1L52.6 657.2L57.4 646.2L60.0 647.3L53.7 660.4L51.3 660.4Z" fill="#1c1c1c"/><path d="M46.9 693.3L49.2 692.1L52.6 697.2L57.4 686.2L60.0 687.3L53.7 700.4L51.3 700.4Z" fill="#1c1c1c"/><path d="M46.9 733.3L49.2 732.1L52.6 737.2L57.4 726.2L60.0 727.3L53.7 740.4L51.3 740.4Z" fill="#1c1c1c"/><path d="M46.9 773.3L49.2 772.1L52.6 777.2L57.4 766.2L60.0 767.3L53.7 780.4L51.3 780.4Z" fill="#1c1c1c"/><path d="M297.8 649.3L302 644.8L306.2 649.3Z M297.8 657.9L302 662.4L306.2 657.9Z" fill="#3c3c3c"/><path d="M304.8 689.3L309 684.8L313.2 689.3Z M304.8 697.9L309 702.4L313.2 697.9Z" fill="#3c3c3c"/><path d="M304.8 729.3L309 724.8L313.2 729.3Z M304.8 737.9L309 742.4L313.2 737.9Z" fill="#3c3c3c"/><path d="M304.8 769.3L309 764.8L313.2 769.3Z M304.8 777.9L309 782.4L313.2 777.9Z" fill="#3c3c3c"/><path d="M292.8 809.3L297 804.8L301.2 809.3Z M292.8 817.9L297 822.4L301.2 817.9Z" fill="#c4c4c4"/><path d="M755.78 646.00L757.77 646.25L757.97 648.53L756.05 649.13L755.90 649.60L757.14 651.19L755.67 652.94L753.89 652.00L753.45 652.23L753.20 654.22L750.92 654.42L750.32 652.50L749.85 652.35L748.26 653.59L746.51 652.12L747.45 650.34L747.22 649.90L745.23 649.65L745.03 647.37L746.95 646.77L747.10 646.30L745.86 644.71L747.33 642.96L749.11 643.90L749.55 643.67L749.80 641.68L752.08 641.48L752.68 643.40L753.15 643.55L754.74 642.31L756.49 643.78L755.55 645.56ZM754.00 647.95A2.5 2.5 0 1 0 749.00 647.95A2.5 2.5 0 1 0 754.00 647.95Z" fill="#262626" fill-rule="evenodd"/><path d="M766.84 657.30L768.57 658.68L767.61 660.98L765.42 660.74L765.05 661.11L765.29 663.30L762.99 664.26L761.61 662.53L761.09 662.53L759.71 664.26L757.41 663.30L757.65 661.11L757.28 660.74L755.09 660.98L754.13 658.68L755.86 657.30L755.86 656.78L754.13 655.40L755.09 653.10L757.28 653.34L757.65 652.97L757.41 650.78L759.71 649.82L761.09 651.55L761.61 651.55L762.99 649.82L765.29 650.78L765.05 652.97L765.42 653.34L767.61 653.10L768.57 655.40L766.84 656.78ZM764.35 657.04A3.0 3.0 0 1 0 758.35 657.04A3.0 3.0 0 1 0 764.35 657.04Z" fill="#262626" fill-rule="evenodd"/><path d="M791.35 648.98A8.3 8.3 0 1 1 798.89 661.05" fill="none" stroke="#262626" stroke-width="1.85"/><path d="M788.05 646.00L788.05 653.70L794.45 650.10Z" fill="#262626"/><path d="M755.78 686.00L757.77 686.25L757.97 688.53L756.05 689.13L755.90 689.60L757.14 691.19L755.67 692.94L753.89 692.00L753.45 692.23L753.20 694.22L750.92 694.42L750.32 692.50L749.85 692.35L748.26 693.59L746.51 692.12L747.45 690.34L747.22 689.90L745.23 689.65L745.03 687.37L746.95 686.77L747.10 686.30L745.86 684.71L747.33 682.96L749.11 683.90L749.55 683.67L749.80 681.68L752.08 681.48L752.68 683.40L753.15 683.55L754.74 682.31L756.49 683.78L755.55 685.56ZM754.00 687.95A2.5 2.5 0 1 0 749.00 687.95A2.5 2.5 0 1 0 754.00 687.95Z" fill="#262626" fill-rule="evenodd"/><path d="M766.84 697.30L768.57 698.68L767.61 700.98L765.42 700.74L765.05 701.11L765.29 703.30L762.99 704.26L761.61 702.53L761.09 702.53L759.71 704.26L757.41 703.30L757.65 701.11L757.28 700.74L755.09 700.98L754.13 698.68L755.86 697.30L755.86 696.78L754.13 695.40L755.09 693.10L757.28 693.34L757.65 692.97L757.41 690.78L759.71 689.82L761.09 691.55L761.61 691.55L762.99 689.82L765.29 690.78L765.05 692.97L765.42 693.34L767.61 693.10L768.57 695.40L766.84 696.78ZM764.35 697.04A3.0 3.0 0 1 0 758.35 697.04A3.0 3.0 0 1 0 764.35 697.04Z" fill="#262626" fill-rule="evenodd"/><path d="M791.35 688.98A8.3 8.3 0 1 1 798.89 701.05" fill="none" stroke="#262626" stroke-width="1.85"/><path d="M788.05 686.00L788.05 693.70L794.45 690.10Z" fill="#262626"/><path d="M755.78 726.00L757.77 726.25L757.97 728.53L756.05 729.13L755.90 729.60L757.14 731.19L755.67 732.94L753.89 732.00L753.45 732.23L753.20 734.22L750.92 734.42L750.32 732.50L749.85 732.35L748.26 733.59L746.51 732.12L747.45 730.34L747.22 729.90L745.23 729.65L745.03 727.37L746.95 726.77L747.10 726.30L745.86 724.71L747.33 722.96L749.11 723.90L749.55 723.67L749.80 721.68L752.08 721.48L752.68 723.40L753.15 723.55L754.74 722.31L756.49 723.78L755.55 725.56ZM754.00 727.95A2.5 2.5 0 1 0 749.00 727.95A2.5 2.5 0 1 0 754.00 727.95Z" fill="#262626" fill-rule="evenodd"/><path d="M766.84 737.30L768.57 738.68L767.61 740.98L765.42 740.74L765.05 741.11L765.29 743.30L762.99 744.26L761.61 742.53L761.09 742.53L759.71 744.26L757.41 743.30L757.65 741.11L757.28 740.74L755.09 740.98L754.13 738.68L755.86 737.30L755.86 736.78L754.13 735.40L755.09 733.10L757.28 733.34L757.65 732.97L757.41 730.78L759.71 729.82L761.09 731.55L761.61 731.55L762.99 729.82L765.29 730.78L765.05 732.97L765.42 733.34L767.61 733.10L768.57 735.40L766.84 736.78ZM764.35 737.04A3.0 3.0 0 1 0 758.35 737.04A3.0 3.0 0 1 0 764.35 737.04Z" fill="#262626" fill-rule="evenodd"/><path d="M791.35 728.98A8.3 8.3 0 1 1 798.89 741.05" fill="none" stroke="#262626" stroke-width="1.85"/><path d="M788.05 726.00L788.05 733.70L794.45 730.10Z" fill="#262626"/><path d="M755.78 766.00L757.77 766.25L757.97 768.53L756.05 769.13L755.90 769.60L757.14 771.19L755.67 772.94L753.89 772.00L753.45 772.23L753.20 774.22L750.92 774.42L750.32 772.50L749.85 772.35L748.26 773.59L746.51 772.12L747.45 770.34L747.22 769.90L745.23 769.65L745.03 767.37L746.95 766.77L747.10 766.30L745.86 764.71L747.33 762.96L749.11 763.90L749.55 763.67L749.80 761.68L752.08 761.48L752.68 763.40L753.15 763.55L754.74 762.31L756.49 763.78L755.55 765.56ZM754.00 767.95A2.5 2.5 0 1 0 749.00 767.95A2.5 2.5 0 1 0 754.00 767.95Z" fill="#262626" fill-rule="evenodd"/><path d="M766.84 777.30L768.57 778.68L767.61 780.98L765.42 780.74L765.05 781.11L765.29 783.30L762.99 784.26L761.61 782.53L761.09 782.53L759.71 784.26L757.41 783.30L757.65 781.11L757.28 780.74L755.09 780.98L754.13 778.68L755.86 777.30L755.86 776.78L754.13 775.40L755.09 773.10L757.28 773.34L757.65 772.97L757.41 770.78L759.71 769.82L761.09 771.55L761.61 771.55L762.99 769.82L765.29 770.78L765.05 772.97L765.42 773.34L767.61 773.10L768.57 775.40L766.84 776.78ZM764.35 777.04A3.0 3.0 0 1 0 758.35 777.04A3.0 3.0 0 1 0 764.35 777.04Z" fill="#262626" fill-rule="evenodd"/><path d="M791.35 768.98A8.3 8.3 0 1 1 798.89 781.05" fill="none" stroke="#262626" stroke-width="1.85"/><path d="M788.05 766.00L788.05 773.70L794.45 770.10Z" fill="#262626"/><path d="M755.78 806.00L757.77 806.25L757.97 808.53L756.05 809.13L755.90 809.60L757.14 811.19L755.67 812.94L753.89 812.00L753.45 812.23L753.20 814.22L750.92 814.42L750.32 812.50L749.85 812.35L748.26 813.59L746.51 812.12L747.45 810.34L747.22 809.90L745.23 809.65L745.03 807.37L746.95 806.77L747.10 806.30L745.86 804.71L747.33 802.96L749.11 803.90L749.55 803.67L749.80 801.68L752.08 801.48L752.68 803.40L753.15 803.55L754.74 802.31L756.49 803.78L755.55 805.56ZM754.00 807.95A2.5 2.5 0 1 0 749.00 807.95A2.5 2.5 0 1 0 754.00 807.95Z" fill="#727272" fill-rule="evenodd"/><path d="M766.84 817.30L768.57 818.68L767.61 820.98L765.42 820.74L765.05 821.11L765.29 823.30L762.99 824.26L761.61 822.53L761.09 822.53L759.71 824.26L757.41 823.30L757.65 821.11L757.28 820.74L755.09 820.98L754.13 818.68L755.86 817.30L755.86 816.78L754.13 815.40L755.09 813.10L757.28 813.34L757.65 812.97L757.41 810.78L759.71 809.82L761.09 811.55L761.61 811.55L762.99 809.82L765.29 810.78L765.05 812.97L765.42 813.34L767.61 813.10L768.57 815.40L766.84 816.78ZM764.35 817.04A3.0 3.0 0 1 0 758.35 817.04A3.0 3.0 0 1 0 764.35 817.04Z" fill="#727272" fill-rule="evenodd"/><path d="M791.35 808.98A8.3 8.3 0 1 1 798.89 821.05" fill="none" stroke="#727272" stroke-width="1.85"/><path d="M788.05 806.00L788.05 813.70L794.45 810.10Z" fill="#727272"/></svg>
<div class="t" style="left:343.6px;top:14.03px;font-size:23px;letter-spacing:0.078px;color:#1b1b1b;">Wobble Analysis</div>
<div class="t" style="left:26.44px;top:405.63px;font-size:15.5px;letter-spacing:-0.045px;color:#1c7ca6;">Distance -158.5, Depth 56.43</div>
<div class="t" style="left:26.68px;top:436.63px;font-size:15.5px;letter-spacing:0.308px;color:#1a1a1a;">Multibeam Options</div>
<div class="t" style="left:26.53px;top:564.63px;font-size:15.5px;letter-spacing:0.199px;color:#1a1a1a;">Motion Sensor Options</div>
<div class="t" style="left:71.77px;top:478.63px;font-size:15.5px;letter-spacing:0.192px;color:#1a1a1a;">Transmit beam is positive forward</div>
<div class="t" style="left:72.04px;top:514.63px;font-size:15.5px;letter-spacing:-0.017px;color:#1a1a1a;">Receive beam is positive starboard</div>
<div class="t" style="left:355.77px;top:478.63px;font-size:15.5px;letter-spacing:0.052px;color:#1a1a1a;">Transmit beam is sonar relative</div>
<div class="t" style="left:356.04px;top:514.63px;font-size:15.5px;letter-spacing:-0.063px;color:#1a1a1a;">Receiver beam is sonar relative</div>
<div class="t" style="left:71.53px;top:606.63px;font-size:15.5px;letter-spacing:0.255px;color:#1a1a1a;">Positive roll port up</div>
<div class="t" style="left:251.53px;top:606.63px;font-size:15.5px;letter-spacing:0.172px;color:#1a1a1a;">Positive pitch bow up</div>
<div class="t" style="left:443.53px;top:606.63px;font-size:15.5px;letter-spacing:-0.067px;color:#1a1a1a;">Positive heave up</div>
<div class="t" style="left:71.53px;top:644.63px;font-size:15.5px;letter-spacing:0.205px;color:#1a1a1a;">Motion Latency:</div>
<div class="t" style="left:72.05px;top:684.63px;font-size:15.5px;letter-spacing:0.066px;color:#1a1a1a;">Along Track:</div>
<div class="t" style="left:72.05px;top:724.63px;font-size:15.5px;letter-spacing:-0.195px;color:#1a1a1a;">Across Track:</div>
<div class="t" style="left:71.58px;top:764.63px;font-size:15.5px;letter-spacing:0.727px;color:#1a1a1a;">Up:</div>
<div class="t" style="left:71.32px;top:804.63px;font-size:15.5px;letter-spacing:0.271px;color:#1a1a1a;">Yaw Misalignment:</div>
<div class="t" style="left:234.47px;top:644.63px;font-size:15.5px;letter-spacing:-0.025px;color:#1e1e24;">0.000 s</div>
<div class="t" style="left:234.47px;top:684.63px;font-size:15.5px;letter-spacing:0.36px;color:#1e1e24;">0.000 m</div>
<div class="t" style="left:234.47px;top:724.63px;font-size:15.5px;letter-spacing:0.36px;color:#1e1e24;">0.000 m</div>
<div class="t" style="left:234.47px;top:764.63px;font-size:15.5px;letter-spacing:0.36px;color:#1e1e24;">0.000 m</div>
<div class="t" style="left:229.24px;top:804.63px;font-size:15.5px;letter-spacing:0.322px;color:#9a9a9a;">-4.990°</div>
<div class="t" style="left:677.77px;top:861.46px;font-size:16px;letter-spacing:-0.585px;color:#111;">Cancel</div>
<div class="t" style="left:770.05px;top:861.46px;font-size:16px;letter-spacing:0.104px;color:#9b9b9b;">Apply</div>
</body></html>
